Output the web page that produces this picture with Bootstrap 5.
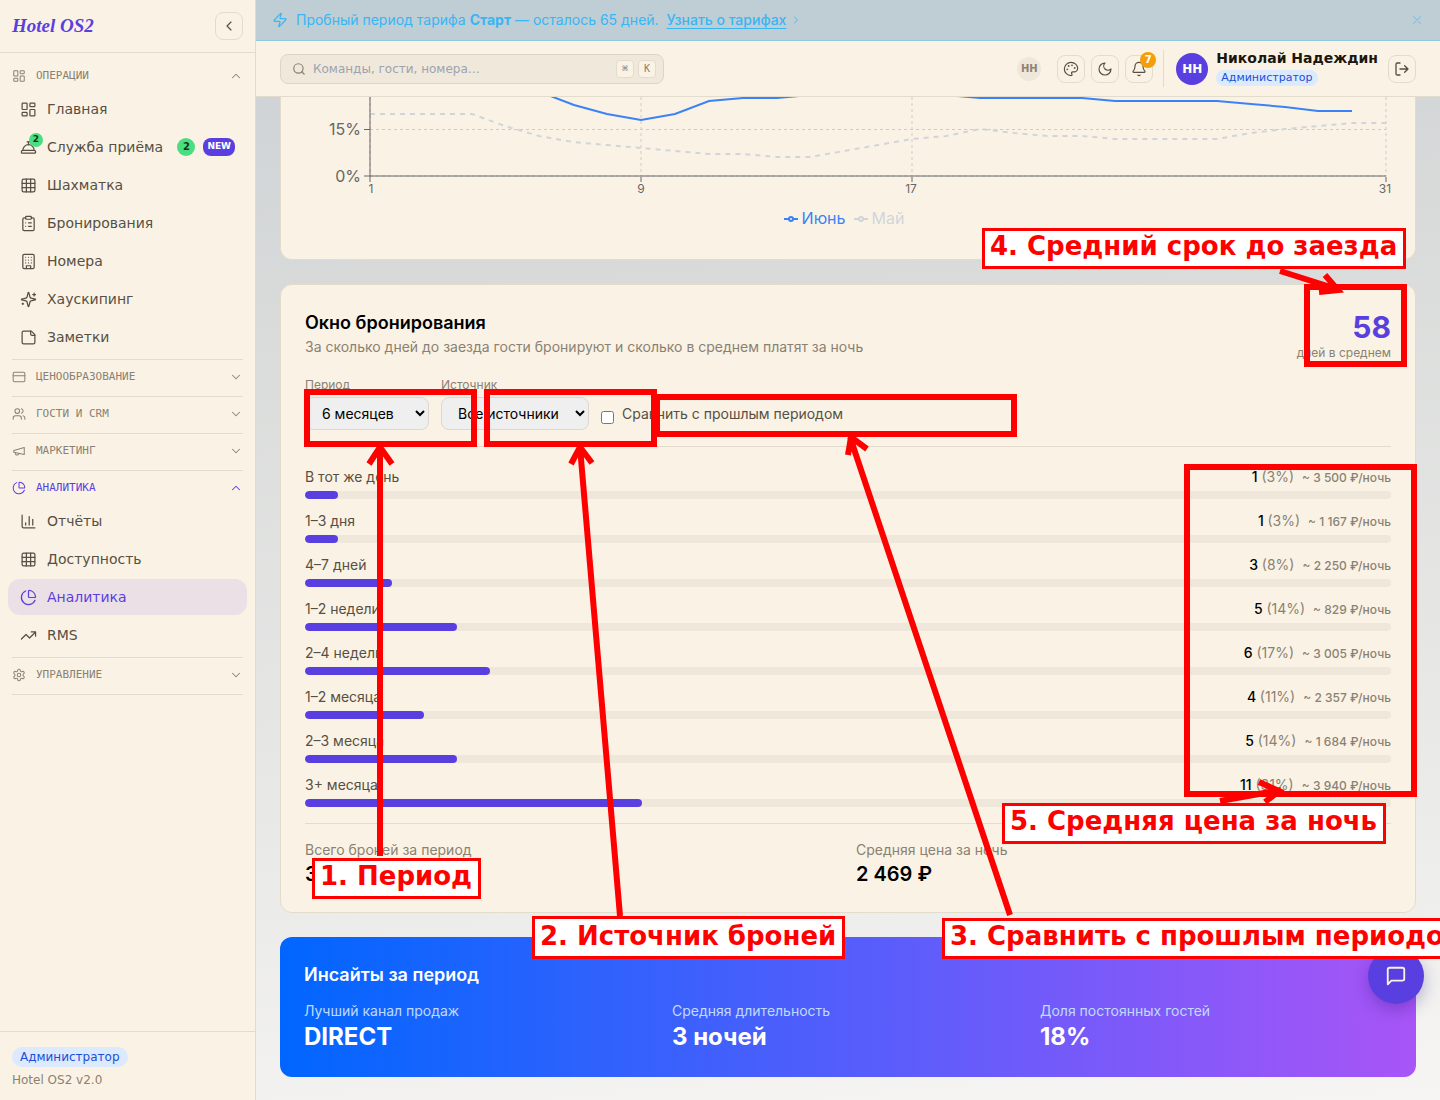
<!DOCTYPE html>
<html lang="ru">
<head>
<meta charset="utf-8">
<meta name="viewport" content="width=device-width, initial-scale=1">
<title>Hotel OS2 — Аналитика</title>
<link href="https://cdn.jsdelivr.net/npm/bootstrap@5.3.0/dist/css/bootstrap.min.css" rel="stylesheet">
<style>
:root{--paper:#faf3e5;--line:#e3dccd;--soft:#efe7da;--ink:#1c1610;--text:#574f43;--mute:#8a8172;--brand:#5a3fe0}
body{font-family:Inter,"Liberation Sans",sans-serif;font-size:14px;line-height:20px;color:#000;background:#f5f4f2}
.ui-font{font-family:"DejaVu Sans",sans-serif}
svg.ico{fill:none;stroke:currentColor;stroke-width:2;stroke-linecap:round;stroke-linejoin:round;flex:none;display:block}
.i12{width:12px;height:12px}.i14{width:14px;height:14px}.i16{width:16px;height:16px}.i17{width:17px;height:17px}.i22{width:22px;height:22px}
.shell{overflow:hidden;height:100vh;min-height:1100px;background:linear-gradient(175deg,#cbd0d5 0%,#d9dbda 28%,#ececea 78%,#f6f5f3 100%)}
.work{min-width:0}
.side{width:256px;background:var(--paper);border-right:1px solid var(--line);color:var(--text)}
.side svg.ico{stroke-width:1.75}
.side-head{height:53px;border-bottom:1px solid var(--line);padding:0 12px}
.logo{font:italic 700 19px/24px "Liberation Serif",serif;color:var(--brand);text-decoration:none}
.sq-btn{width:28px;height:28px;border:1px solid var(--line);border-radius:8px;background:transparent;color:var(--text);padding:0;display:flex;align-items:center;justify-content:center;position:relative;flex:none}
.side-nav{padding:6px 12px 0}
.grp{border-bottom:1px solid var(--line);padding:2px 0 4px}
.grp-btn{height:30px;width:100%;border:0;background:none;padding:0;gap:10px;font:11px/16px "DejaVu Sans Mono",monospace;color:var(--mute);text-transform:uppercase;text-align:left}
.grp-btn.on{color:var(--brand)}
.side-list{row-gap:2px}
.side-link{height:36px;padding:0 12px;margin:0 -4px;border-radius:12px;color:var(--text);text-decoration:none}
.side-link.on{background:#eae0e6;color:var(--brand)}
.lbl-nav{margin-left:10px}
.cnt{width:18px;height:18px;border-radius:9px;background:#4ade80;color:#14351f;font-size:10px;line-height:18px;font-weight:700;text-align:center}
.cnt-mini{position:absolute;top:-6px;right:-6px;width:14px;height:14px;border-radius:7px;background:#4ade80;color:#14351f;font-size:9px;line-height:12px;font-weight:700;text-align:center}
.new-tag{background:var(--brand);color:#fff;border-radius:8px;font-size:9px;line-height:17px;height:18px;padding:0 4px;font-weight:700}
.role{background:#dbeafe;color:#1d4ed8;border-radius:10px;padding:0 8px;font-size:12px;line-height:20px;display:inline-block}
.role-sm{font-size:11px;line-height:16px;padding:0 5px;display:table}
.side-foot{border-top:1px solid var(--line);padding:15px 12px 12px;font-size:12px;color:var(--mute)}
.side-foot .ver{line-height:16px;margin-top:5px}
.trial{height:41px;background:#bfcdd4;border-bottom:1px solid #8fc8de;color:#38b6f5;padding:0 16px}
.trial a{color:inherit;text-underline-offset:3px;font-weight:500}
.trial button{color:#6cc4ec;background:none;border:0;padding:0}
.top{height:56px;background:var(--paper);border-bottom:1px solid var(--line);padding:0 24px;position:relative;z-index:2}
.find{width:384px;height:30px;border:1px solid #ddd5c6;border-radius:8px;background:#f0e8db;padding:0 7px 0 11px;color:var(--mute)}
.find svg{margin-right:7px}
.find input{border:0;background:none;outline:0;font-size:12px;padding:0;min-width:0}
.find input::placeholder{color:#9ca3af;opacity:1}
.find kbd{width:18px;height:18px;border:1px solid var(--line);border-radius:4px;background:var(--paper);color:var(--mute);font:10px/16px "DejaVu Sans Mono",monospace;padding:0;text-align:center}
.ava{width:32px;height:32px;border-radius:16px;background:var(--brand);color:#fff;font-size:12px;line-height:32px;font-weight:700;text-align:center}
.ava-sm{width:24px;height:24px;line-height:24px;background:#efe7da;color:#8c8374;font-size:10px}
.tools{gap:6px;margin-right:10px}
.tools svg.ico,.trial svg.ico{stroke-width:1.75}
.vr-line{width:1px;height:37px;background:var(--line);margin-right:12px}
.who{margin:0 10px 0 8px;padding-bottom:3px}
.bell-n{position:absolute;top:-4px;right:-4px;width:16px;height:16px;border-radius:8px;background:#f59e0b;color:#fff;font-size:10px;line-height:16px;font-weight:700;text-align:center}
.user-name{font-size:14px;line-height:18px;margin-bottom:3px;font-weight:700;color:var(--ink)}
.panel{background:var(--paper);border:1px solid var(--line);border-radius:12px;padding:24px}
.panel-cut{border-top:0;border-radius:0 0 12px 12px;padding:0 24px 29px}
.chart{display:block;width:100%;height:auto}
.legend-row{font-size:16px;line-height:24px;padding:2px 8px 0 0}
.leg-a{color:#3b82f6}.leg-b{color:#d1d5db}
.t18{font-size:18px;line-height:28px;font-weight:600;margin:0}
.mute{color:var(--mute)}
.t12{font-size:12px;line-height:16px}
.big{font-size:30px;line-height:36px;font-weight:700;color:var(--brand)}
.filters{column-gap:12px}
.pick{height:33px;border:1px solid #dcd8d0;border-radius:8px;background:#efefef;padding:0 0 0 12px;font-size:14px;color:#000}
.pick-a{width:124px}.pick-b{width:148px}
.cmp{color:var(--text);padding-bottom:6px}
.tick{width:13px;height:13px;margin:7px 0 0}
.split{border-top:1px solid var(--line)}
.rows{row-gap:12px;padding:20px 0 16px}
.bar-name{color:var(--text)}
.bar-val{font-weight:500}
.bar-val span{font-weight:400;color:var(--mute)}
.bar-val small{font-size:12px;line-height:12px;color:var(--mute);margin-left:8px}
.track{height:8px;border-radius:4px;background:var(--soft);overflow:hidden}
.fill{height:8px;border-radius:4px;background:var(--brand)}
.sum{font-size:20px;line-height:28px;font-weight:600}
.insight{border-radius:12px;padding:24px;background:linear-gradient(90deg,#06f,#a855f7);color:#fff}
.ins-title{margin-bottom:12px}
.insight .lbl{color:#bfdbfe}
.insight .val{font-size:24px;line-height:32px;font-weight:700}
.chat{position:absolute;right:16px;bottom:96px;width:56px;height:56px;border:0;border-radius:28px;background:var(--brand);color:var(--paper);display:flex;align-items:center;justify-content:center;box-shadow:0 6px 16px rgba(40,20,120,.3);z-index:3}
.notes{position:absolute;inset:0;pointer-events:none;z-index:4}
.notes svg{position:absolute;left:0;top:0}
.tip{position:absolute;white-space:nowrap;background:#fff;border:3px solid red;color:red;font:700 26px/31px "DejaVu Sans",sans-serif;padding:0 6px 4px 5px}
.n1{left:312px;top:858px}.n2{left:532px;top:916px;padding-top:2px}.n3{left:942px;top:918px}.n4{left:982px;top:228px}.n5{left:1002px;top:803px}
</style>
<script src="https://cdn.jsdelivr.net/npm/bootstrap@5.3.0/dist/js/bootstrap.bundle.min.js"></script>
</head>
<body>
<svg width="0" height="0" class="position-absolute" aria-hidden="true">
<symbol id="dash" viewBox="0 0 24 24"><rect x="3" y="3" width="7" height="9" rx="1"/><rect x="14" y="3" width="7" height="5" rx="1"/><rect x="14" y="12" width="7" height="9" rx="1"/><rect x="3" y="16" width="7" height="5" rx="1"/></symbol>
<symbol id="bellhop" viewBox="0 0 24 24"><path d="M3 20a1 1 0 0 1-1-1v-1a2 2 0 0 1 2-2h16a2 2 0 0 1 2 2v1a1 1 0 0 1-1 1Z"/><path d="M20 16a8 8 0 1 0-16 0"/><path d="M12 4v4"/><path d="M10 4h4"/></symbol>
<symbol id="grid" viewBox="0 0 24 24"><rect x="3" y="3" width="18" height="18" rx="2"/><path d="M3 9h18M3 15h18M9 3v18M15 3v18"/></symbol>
<symbol id="clip" viewBox="0 0 24 24"><rect x="8" y="2" width="8" height="4" rx="1"/><path d="M16 4h2a2 2 0 0 1 2 2v14a2 2 0 0 1-2 2H6a2 2 0 0 1-2-2V6a2 2 0 0 1 2-2h2M12 11h4M12 16h4M8 11h.01M8 16h.01"/></symbol>
<symbol id="house" viewBox="0 0 24 24"><rect x="4" y="2" width="16" height="20" rx="2"/><path d="M9 22v-4h6v4M8 6h.01M16 6h.01M12 6h.01M12 10h.01M12 14h.01M16 10h.01M16 14h.01M8 10h.01M8 14h.01"/></symbol>
<symbol id="spark" viewBox="0 0 24 24"><path d="M9.937 15.5A2 2 0 0 0 8.5 14.063l-6.135-1.582a.5.5 0 0 1 0-.962L8.5 9.936A2 2 0 0 0 9.937 8.5l1.582-6.135a.5.5 0 0 1 .963 0L14.063 8.5A2 2 0 0 0 15.5 9.937l6.135 1.581a.5.5 0 0 1 0 .964L15.5 14.063a2 2 0 0 0-1.437 1.437l-1.582 6.135a.5.5 0 0 1-.963 0z"/><path d="M20 3v4M22 5h-4M4 17v2M5 18H3"/></symbol>
<symbol id="note" viewBox="0 0 24 24"><path d="M16 3H5a2 2 0 0 0-2 2v14a2 2 0 0 0 2 2h14a2 2 0 0 0 2-2V8Z"/><path d="M15 3v4a2 2 0 0 0 2 2h4"/></symbol>
<symbol id="creditcard" viewBox="0 0 24 24"><rect x="2" y="4" width="20" height="16" rx="2"/><path d="M2 10h20"/></symbol>
<symbol id="users" viewBox="0 0 24 24"><path d="M16 21v-2a4 4 0 0 0-4-4H6a4 4 0 0 0-4 4v2"/><circle cx="9" cy="7" r="4"/><path d="M22 21v-2a4 4 0 0 0-3-3.870M16 3.130a4 4 0 0 1 0 7.750"/></symbol>
<symbol id="mega" viewBox="0 0 24 24"><path d="m3 11 18-5v12L3 14v-3zM11.600 16.800a3 3 0 1 1-5.800-1.600"/></symbol>
<symbol id="pie" viewBox="0 0 24 24"><path d="M21 12c.552 0 1.005-.449.950-.998a10 10 0 0 0-8.953-8.951c-.550-.055-.998.398-.998.950v8a1 1 0 0 0 1 1z"/><path d="M21.210 15.890A10 10 0 1 1 8 2.830"/></symbol>
<symbol id="bars" viewBox="0 0 24 24"><path d="M3 3v16a2 2 0 0 0 2 2h16M18 17V9M13 17V5M8 17v-3"/></symbol>
<symbol id="trend" viewBox="0 0 24 24"><path d="m22 7-8.500 8.500-5-5L2 17M16 7h6v6"/></symbol>
<symbol id="gear" viewBox="0 0 24 24"><path d="M12.220 2h-.440a2 2 0 0 0-2 2v.180a2 2 0 0 1-1 1.730l-.430.250a2 2 0 0 1-2 0l-.150-.080a2 2 0 0 0-2.730.730l-.220.380a2 2 0 0 0 .730 2.730l.150.100a2 2 0 0 1 1 1.720v.510a2 2 0 0 1-1 1.740l-.150.090a2 2 0 0 0-.730 2.730l.220.380a2 2 0 0 0 2.730.730l.150-.080a2 2 0 0 1 2 0l.430.250a2 2 0 0 1 1 1.730V20a2 2 0 0 0 2 2h.440a2 2 0 0 0 2-2v-.180a2 2 0 0 1 1-1.730l.430-.250a2 2 0 0 1 2 0l.150.080a2 2 0 0 0 2.730-.730l.220-.390a2 2 0 0 0-.730-2.730l-.150-.080a2 2 0 0 1-1-1.740v-.500a2 2 0 0 1 1-1.740l.150-.090a2 2 0 0 0 .730-2.730l-.220-.380a2 2 0 0 0-2.730-.730l-.150.080a2 2 0 0 1-2 0l-.430-.250a2 2 0 0 1-1-1.730V4a2 2 0 0 0-2-2z"/><circle cx="12" cy="12" r="3"/></symbol>
<symbol id="up" viewBox="0 0 24 24"><path d="m18 15-6-6-6 6"/></symbol>
<symbol id="down" viewBox="0 0 24 24"><path d="m6 9 6 6 6-6"/></symbol>
<symbol id="left" viewBox="0 0 24 24"><path d="m15 18-6-6 6-6"/></symbol>
<symbol id="right" viewBox="0 0 24 24"><path d="m9 18 6-6-6-6"/></symbol>
<symbol id="zap" viewBox="0 0 24 24"><path d="M4 14a1 1 0 0 1-.780-1.630l9.900-10.200a.5.5 0 0 1 .860.460l-1.920 6.020A1 1 0 0 0 13 10h7a1 1 0 0 1 .780 1.630l-9.900 10.200a.5.5 0 0 1-.860-.460l1.920-6.020A1 1 0 0 0 11 14z"/></symbol>
<symbol id="close" viewBox="0 0 24 24"><path d="M18 6 6 18M6 6l12 12"/></symbol>
<symbol id="search" viewBox="0 0 24 24"><circle cx="11" cy="11" r="8"/><path d="m21 21-4.300-4.300"/></symbol>
<symbol id="palette" viewBox="0 0 24 24"><circle cx="13.500" cy="6.500" r=".5"/><circle cx="17.500" cy="10.500" r=".5"/><circle cx="8.500" cy="7.500" r=".5"/><circle cx="6.500" cy="12.500" r=".5"/><path d="M12 2C6.500 2 2 6.500 2 12s4.500 10 10 10c.926 0 1.648-.746 1.648-1.688 0-.437-.180-.835-.437-1.125-.290-.289-.438-.652-.438-1.125a1.640 1.640 0 0 1 1.668-1.668h1.996c3.051 0 5.555-2.503 5.555-5.554C21.965 6.012 17.461 2 12 2z"/></symbol>
<symbol id="moon" viewBox="0 0 24 24"><path d="M12 3a6 6 0 0 0 9 9 9 9 0 1 1-9-9Z"/></symbol>
<symbol id="bell" viewBox="0 0 24 24"><path d="M10.300 21a1.940 1.940 0 0 0 3.400 0M3.262 15.326A1 1 0 0 0 4 17h16a1 1 0 0 0 .740-1.673C19.410 13.956 18 12.499 18 8A6 6 0 0 0 6 8c0 4.499-1.411 5.956-2.738 7.326"/></symbol>
<symbol id="exit" viewBox="0 0 24 24"><path d="M9 21H5a2 2 0 0 1-2-2V5a2 2 0 0 1 2-2h4M16 17l5-5-5-5M21 12H9"/></symbol>
<symbol id="msg" viewBox="0 0 24 24"><path d="M21 15a2 2 0 0 1-2 2H7l-4 4V5a2 2 0 0 1 2-2h14a2 2 0 0 1 2 2z"/></symbol>
</svg>

<div class="shell d-flex position-relative">
<aside class="side ui-font d-flex flex-column flex-shrink-0">
  <div class="side-head d-flex align-items-center justify-content-between">
    <a class="logo" href="#">Hotel OS2</a>
    <button class="sq-btn" aria-label="Свернуть меню"><svg class="ico i16"><use href="#left"/></svg></button>
  </div>
  <nav class="side-nav flex-grow-1">
    <div class="grp">
      <button class="grp-btn d-flex align-items-center"><svg class="ico i14"><use href="#dash"/></svg><span class="flex-grow-1">Операции</span><svg class="ico i14"><use href="#up"/></svg></button>
      <div class="side-list d-grid">
        <a class="side-link d-flex align-items-center" href="#"><svg class="ico i17"><use href="#dash"/></svg><span class="lbl-nav">Главная</span></a>
        <a class="side-link d-flex align-items-center" href="#"><span class="position-relative"><svg class="ico i17"><use href="#bellhop"/></svg><span class="cnt-mini">2</span></span><span class="lbl-nav flex-grow-1">Служба приёма</span><span class="cnt me-2">2</span><span class="new-tag">NEW</span></a>
        <a class="side-link d-flex align-items-center" href="#"><svg class="ico i17"><use href="#grid"/></svg><span class="lbl-nav">Шахматка</span></a>
        <a class="side-link d-flex align-items-center" href="#"><svg class="ico i17"><use href="#clip"/></svg><span class="lbl-nav">Бронирования</span></a>
        <a class="side-link d-flex align-items-center" href="#"><svg class="ico i17"><use href="#house"/></svg><span class="lbl-nav">Номера</span></a>
        <a class="side-link d-flex align-items-center" href="#"><svg class="ico i17"><use href="#spark"/></svg><span class="lbl-nav">Хаускипинг</span></a>
        <a class="side-link d-flex align-items-center" href="#"><svg class="ico i17"><use href="#note"/></svg><span class="lbl-nav">Заметки</span></a>
      </div>
    </div>
    <div class="grp"><button class="grp-btn d-flex align-items-center"><svg class="ico i14"><use href="#creditcard"/></svg><span class="flex-grow-1">Ценообразование</span><svg class="ico i14"><use href="#down"/></svg></button></div>
    <div class="grp"><button class="grp-btn d-flex align-items-center"><svg class="ico i14"><use href="#users"/></svg><span class="flex-grow-1">Гости и CRM</span><svg class="ico i14"><use href="#down"/></svg></button></div>
    <div class="grp"><button class="grp-btn d-flex align-items-center"><svg class="ico i14"><use href="#mega"/></svg><span class="flex-grow-1">Маркетинг</span><svg class="ico i14"><use href="#down"/></svg></button></div>
    <div class="grp">
      <button class="grp-btn on d-flex align-items-center"><svg class="ico i14"><use href="#pie"/></svg><span class="flex-grow-1">Аналитика</span><svg class="ico i14"><use href="#up"/></svg></button>
      <div class="side-list d-grid">
        <a class="side-link d-flex align-items-center" href="#"><svg class="ico i17"><use href="#bars"/></svg><span class="lbl-nav">Отчёты</span></a>
        <a class="side-link d-flex align-items-center" href="#"><svg class="ico i17"><use href="#grid"/></svg><span class="lbl-nav">Доступность</span></a>
        <a class="side-link on d-flex align-items-center" href="#" aria-current="page"><svg class="ico i17"><use href="#pie"/></svg><span class="lbl-nav">Аналитика</span></a>
        <a class="side-link d-flex align-items-center" href="#"><svg class="ico i17"><use href="#trend"/></svg><span class="lbl-nav">RMS</span></a>
      </div>
    </div>
    <div class="grp"><button class="grp-btn d-flex align-items-center"><svg class="ico i14"><use href="#gear"/></svg><span class="flex-grow-1">Управление</span><svg class="ico i14"><use href="#down"/></svg></button></div>
  </nav>
  <div class="side-foot"><span class="role">Администратор</span><div class="ver">Hotel OS2 v2.0</div></div>
</aside>

<div class="work flex-grow-1 d-flex flex-column">
  <div class="trial d-flex align-items-center">
    <svg class="ico i16 me-2"><use href="#zap"/></svg><span class="me-2">Пробный период тарифа <b>Старт</b> — осталось 65 дней.</span><a href="#">Узнать о тарифах</a><svg class="ico i12 ms-1"><use href="#right"/></svg>
    <button class="ms-auto" aria-label="Закрыть"><svg class="ico i14"><use href="#close"/></svg></button>
  </div>
  <header class="top ui-font d-flex align-items-center flex-shrink-0">
    <div class="find d-flex align-items-center"><svg class="ico i14"><use href="#search"/></svg><input class="flex-grow-1" type="text" aria-label="Поиск" placeholder="Команды, гости, номера…"><kbd class="me-1">⌘</kbd><kbd>K</kbd></div>
    <div class="d-flex align-items-center ms-auto">
      <div class="ava ava-sm me-3">НН</div>
      <div class="d-flex tools"><button class="sq-btn" aria-label="Тема"><svg class="ico i16"><use href="#palette"/></svg></button><button class="sq-btn" aria-label="Тёмный режим"><svg class="ico i16"><use href="#moon"/></svg></button><button class="sq-btn" aria-label="Уведомления"><svg class="ico i16"><use href="#bell"/></svg><span class="bell-n">7</span></button></div>
      <div class="vr-line"></div>
      <div class="ava">НН</div>
      <div class="who"><div class="user-name">Николай Надеждин</div><span class="role role-sm">Администратор</span></div>
      <button class="sq-btn" aria-label="Выйти"><svg class="ico i16"><use href="#exit"/></svg></button>
    </div>
  </header>
  <main class="px-4 d-flex flex-column gap-4">
    <section class="panel panel-cut">
      <svg class="chart" viewBox="0 0 1086 107" font-family="Inter, sans-serif" fill="none">
        <g stroke="#ccc" stroke-dasharray="3 3"><path d="M65 32.500H1081M65 79H1081M65 0V79M336 0V79M607 0V79M1081 0V79"/></g>
        <g stroke="#d1d5db" stroke-width="2" stroke-dasharray="5 5"><path d="M65 17H167L200 29L234 39L268 45L302 48L336 51L370 54L404 57H438L472 60H505L539 54L573 48L607 42L641 39L675 32L709 36L743 39H777L811 42H912L946 36L980 32L1013 29L1047 26H1081"/></g>
        <path stroke="#3b82f6" stroke-width="2" d="M235 -5L269 8L302 17L336 23L370 17L404 4L438 1H472L505 -2H641L675 1H777L810 4H912L946 7L980 10L1013 14H1047"/>
        <path stroke="#666" d="M65 0V80M65 79H1081M59 32.500H65M59 79H65M65 80V85M336 80V85M607 80V85M1081 80V85"/>
        <g fill="#666" font-size="16" text-anchor="end"><text x="56" y="38">15%</text><text x="56" y="85">0%</text></g>
        <g fill="#666" font-size="12" text-anchor="middle"><text x="66" y="96">1</text><text x="336" y="96">9</text><text x="606" y="96">17</text><text x="1080" y="96">31</text></g>
      </svg>
      <div class="legend-row d-flex justify-content-center">
        <span class="d-flex align-items-center me-2 leg-a"><svg width="14" height="14" fill="none" stroke="currentColor" stroke-width="2" class="me-1"><path d="M0 8h5M9 8h5"/><circle cx="7" cy="8" r="2"/></svg>Июнь</span>
        <span class="d-flex align-items-center leg-b"><svg width="14" height="14" fill="none" stroke="currentColor" stroke-width="2" class="me-1"><path d="M0 8h5M9 8h5"/><circle cx="7" cy="8" r="2"/></svg>Май</span>
      </div>
    </section>

    <section class="panel">
      <div class="d-flex justify-content-between mb-3">
        <div><h2 class="t18">Окно бронирования</h2><div class="mute">За сколько дней до заезда гости бронируют и сколько в среднем платят за ночь</div></div>
        <div class="text-end"><div class="big">58</div><div class="t12 mute">дней в среднем</div></div>
      </div>
      <div class="d-flex align-items-end filters mb-3">
        <div><label class="t12 mute d-block mb-1" for="per">Период</label><select id="per" class="pick pick-a d-block"><option>6 месяцев</option></select></div>
        <div><label class="t12 mute d-block mb-1" for="src">Источник</label><select id="src" class="pick pick-b d-block"><option>Все источники</option></select></div>
        <div class="d-flex gap-2 cmp"><input class="tick" type="checkbox" id="cmp"><label for="cmp">Сравнить с прошлым периодом</label></div>
      </div>
      <div class="split rows d-grid">
        <div><div class="d-flex justify-content-between mb-1"><span class="bar-name">В тот же день</span><span class="bar-val">1 <span>(3%)</span><small>~ 3 500 ₽/ночь</small></span></div><div class="track"><div class="fill" style="width:3%"></div></div></div>
        <div><div class="d-flex justify-content-between mb-1"><span class="bar-name">1–3 дня</span><span class="bar-val">1 <span>(3%)</span><small>~ 1 167 ₽/ночь</small></span></div><div class="track"><div class="fill" style="width:3%"></div></div></div>
        <div><div class="d-flex justify-content-between mb-1"><span class="bar-name">4–7 дней</span><span class="bar-val">3 <span>(8%)</span><small>~ 2 250 ₽/ночь</small></span></div><div class="track"><div class="fill" style="width:8%"></div></div></div>
        <div><div class="d-flex justify-content-between mb-1"><span class="bar-name">1–2 недели</span><span class="bar-val">5 <span>(14%)</span><small>~ 829 ₽/ночь</small></span></div><div class="track"><div class="fill" style="width:14%"></div></div></div>
        <div><div class="d-flex justify-content-between mb-1"><span class="bar-name">2–4 недели</span><span class="bar-val">6 <span>(17%)</span><small>~ 3 005 ₽/ночь</small></span></div><div class="track"><div class="fill" style="width:17%"></div></div></div>
        <div><div class="d-flex justify-content-between mb-1"><span class="bar-name">1–2 месяца</span><span class="bar-val">4 <span>(11%)</span><small>~ 2 357 ₽/ночь</small></span></div><div class="track"><div class="fill" style="width:11%"></div></div></div>
        <div><div class="d-flex justify-content-between mb-1"><span class="bar-name">2–3 месяца</span><span class="bar-val">5 <span>(14%)</span><small>~ 1 684 ₽/ночь</small></span></div><div class="track"><div class="fill" style="width:14%"></div></div></div>
        <div><div class="d-flex justify-content-between mb-1"><span class="bar-name">3+ месяца</span><span class="bar-val">11 <span>(31%)</span><small>~ 3 940 ₽/ночь</small></span></div><div class="track"><div class="fill" style="width:31%"></div></div></div>
      </div>
      <div class="split row row-cols-2 gx-3 pt-3 mx-0">
        <div class="ps-0"><div class="mute">Всего броней за период</div><div class="sum">36</div></div>
        <div><div class="mute">Средняя цена за ночь</div><div class="sum">2 469 ₽</div></div>
      </div>
    </section>

    <section class="insight">
      <h2 class="t18 ins-title">Инсайты за период</h2>
      <div class="row gx-3">
        <div class="col"><div class="lbl">Лучший канал продаж</div><div class="val">DIRECT</div></div>
        <div class="col"><div class="lbl">Средняя длительность</div><div class="val">3 ночей</div></div>
        <div class="col"><div class="lbl">Доля постоянных гостей</div><div class="val">18%</div></div>
      </div>
    </section>
  </main>
</div>

<button class="chat" aria-label="Чат"><svg class="ico i22"><use href="#msg"/></svg></button>

<div class="notes">
  <svg width="1440" height="1100" fill="none" stroke="red" stroke-width="6">
    <rect x="307" y="392" width="167" height="52"/><rect x="487" y="392" width="167" height="52"/><rect x="657" y="397" width="357" height="37"/><rect x="1307" y="287" width="97" height="77"/><rect x="1187" y="467" width="227" height="327"/>
    <path d="M380 856V447M369 464L380 447L392 464M620 916L580 447M571 464L580 447L592 463M1010 915L850 437M848 455L851 437L867 449M1280 271L1340 290M1325 275L1338 290L1319 292M1220 801L1281 790M1259 782L1279 791L1265 802"/>
  </svg>
  <div class="tip n1">1. Период</div>
  <div class="tip n2">2. Источник броней</div>
  <div class="tip n3">3. Сравнить с прошлым периодом</div>
  <div class="tip n4">4. Средний срок до заезда</div>
  <div class="tip n5">5. Средняя цена за ночь</div>
</div>
</div>
</body>
</html>
